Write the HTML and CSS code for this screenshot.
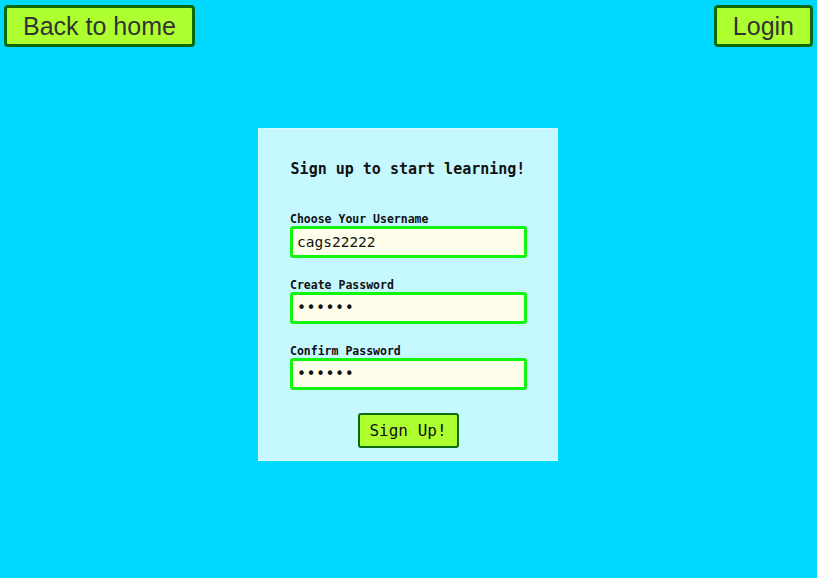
FILE: index.html
```html
<!DOCTYPE html>
<html>
<head>
<meta charset="utf-8">
<link rel="stylesheet" href="styles.css">
</head>
<body>
<header class="topbar">
  <button class="nav-btn">Back to home</button>
  <button class="nav-btn">Login</button>
</header>
<main class="main">
  <form class="card">
    <h2 class="title">Sign up to start learning!</h2>
    <label class="field">
      <span class="label">Choose Your Username</span>
      <input class="input" type="text" value="cags22222">
    </label>
    <label class="field">
      <span class="label">Create Password</span>
      <input class="input pw" type="password" value="123456">
    </label>
    <label class="field">
      <span class="label">Confirm Password</span>
      <input class="input pw" type="password" value="123456">
    </label>
    <div class="actions">
      <button type="button" class="submit">Sign Up!</button>
    </div>
  </form>
</main>
</body>
</html>
```
FILE: styles.css
```css
html, body {
  margin: 0;
  padding: 0;
}
body {
  background: #00d9ff;
  width: 817px;
  height: 578px;
  overflow: hidden;
  font-family: "DejaVu Sans Mono", monospace;
}
.topbar {
  display: flex;
  justify-content: space-between;
  padding: 5px 4px 0 4px;
}
.nav-btn {
  font-family: "Liberation Sans", Arial, sans-serif;
  font-size: 25px;
  line-height: 28px;
  height: 42px;
  padding: 0 16px;
  background: #adff2f;
  color: #333;
  border: 3px solid #0b6a0b;
  border-radius: 4px;
  box-sizing: border-box;
}
.main {
  display: flex;
  justify-content: center;
  padding-top: 81px;
  padding-right: 1px;
}
.card {
  width: 300px;
  box-sizing: border-box;
  background: #c6f8ff;
  border: 1px solid #d8fbff;
  padding: 29px 31px 12px 31px;
  display: flex;
  flex-direction: column;
}
.title {
  margin: 0 0 33px 0;
  font-size: 15px;
  font-weight: bold;
  line-height: 22px;
  text-align: center;
  color: #111;
}
.field {
  display: flex;
  flex-direction: column;
  margin-bottom: 21px;
}
.label {
  font-size: 11.5px;
  font-weight: bold;
  line-height: 12px;
  color: #111;
  margin-bottom: 1px;
}
.input {
  width: 237px;
  height: 32px;
  box-sizing: border-box;
  border: 3px solid #11f511;
  border-radius: 3px;
  background: #fffeea;
  font-family: "DejaVu Sans Mono", monospace;
  font-size: 14.5px;
  padding: 0 4px;
  color: #111;
  outline: none;
}
.pw {
  font-size: 15px;
  letter-spacing: 0.5px;
}
.actions {
  display: flex;
  justify-content: center;
  margin-top: 2px;
}
.submit {
  font-family: "DejaVu Sans Mono", monospace;
  font-size: 16px;
  width: 101px;
  height: 35px;
  box-sizing: border-box;
  background: #adff2f;
  color: #111;
  border: 2px solid #0b6a0b;
  border-radius: 3px;
  padding: 0;
}
```
